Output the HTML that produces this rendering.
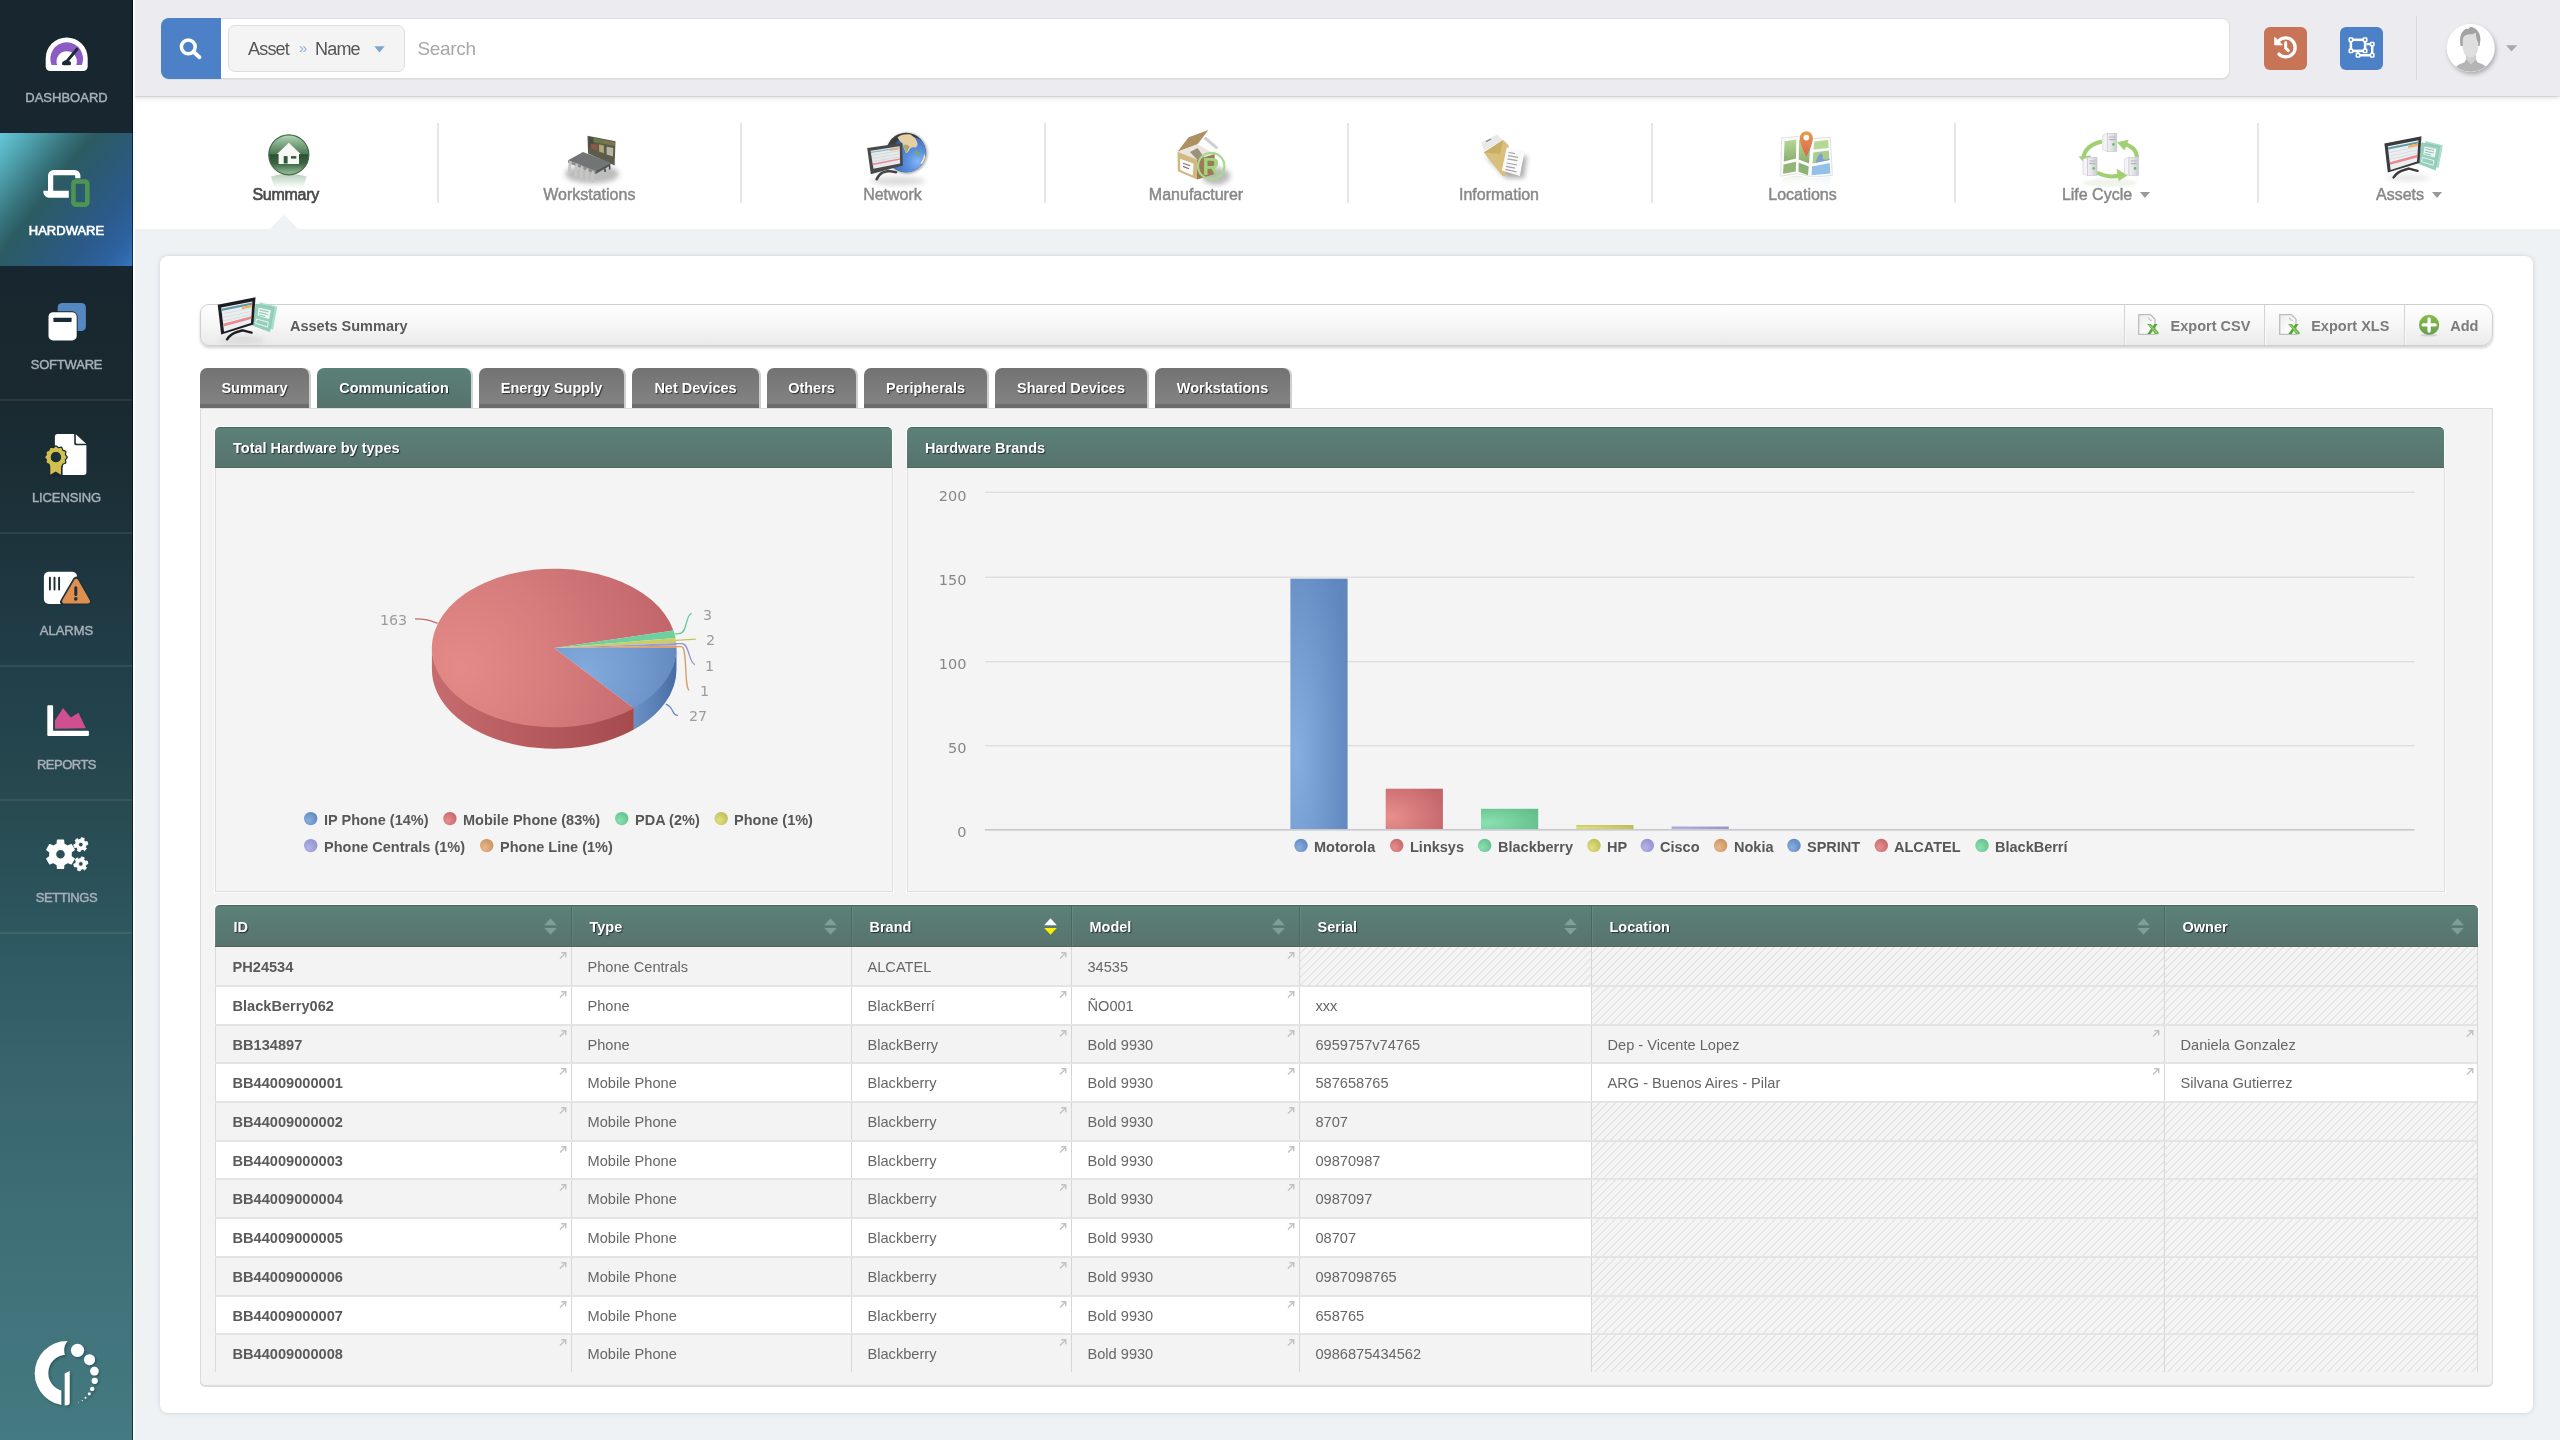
<!DOCTYPE html>
<html lang="en">
<head>
<meta charset="utf-8">
<title>Assets Summary</title>
<style>
*{box-sizing:border-box;margin:0;padding:0}
html,body{width:2560px;height:1440px;overflow:hidden}
body{background:#eef2f5;font-family:"Liberation Sans",sans-serif;color:#555;position:relative}
body>*{will-change:transform}
.abs,svg.abs{position:absolute}
svg{display:block;overflow:visible}
/* sidebar */
#side{position:absolute;left:0;top:0;width:133px;height:1440px;overflow:hidden;
 background:linear-gradient(180deg,#17262f 0px,#18272f 266px,#19292f 400px,#1d333c 540px,#21404a 680px,#27494f 800px,#2f5a63 960px,#39666f 1100px,#3f7078 1250px,#447a81 1440px)}
#side:after{content:"";position:absolute;right:0;top:0;width:1.3px;height:1440px;background:rgba(0,8,22,.62);z-index:3}
#strip{position:absolute;left:133px;top:0;width:2px;height:1440px;background:#fdfdfd;z-index:9}
#side .it{position:absolute;left:0;width:133px;height:133px}
#side .sep{position:absolute;left:0;width:133px;height:2px;background:rgba(255,255,255,.08)}
#side .it.act{z-index:2;background:linear-gradient(128deg,#66c8d8 0%,#4fa3af 14%,#37737c 30%,#2c5b62 40%,#2b5a70 52%,#2b5a88 72%,#2d62a0 88%,#3474ba 100%)}
#side .lb{position:absolute;left:0;width:133px;top:90px;text-align:center;font-size:13px;color:#a8afb9;line-height:16px;-webkit-text-stroke:.45px #a8afb9}
#side .act .lb{color:#fff;-webkit-text-stroke:.65px #fff}
/* top bar */
#top{position:absolute;left:133px;top:0;width:2427px;height:95.5px;background:#ebebf0;box-shadow:0 1px 5px rgba(0,0,0,.2);z-index:5}
#sbox{position:absolute;left:28px;top:18px;width:2069px;height:61px;background:#fff;border:1px solid #dcdce0;border-radius:8px;box-shadow:0 1px 1px rgba(0,0,0,.05)}
#sbtn{position:absolute;left:-1px;top:-1px;width:60px;height:61px;background:#4d81c7;border-radius:8px 0 0 8px}
#ssel{position:absolute;left:66px;top:6px;width:177px;height:47px;background:#f4f4f4;border:1px solid #dedede;border-radius:7px;font-size:18px;color:#555}
#ssel span{position:absolute;top:12px;line-height:22px;white-space:nowrap;letter-spacing:-.8px}
#sph{position:absolute;left:255.5px;top:17.5px;font-size:19px;color:#a8a8a8;line-height:24px;letter-spacing:-.35px}
.tbtn{position:absolute;top:27px;width:43px;height:43px;border-radius:6px}
/* nav */
#nav{position:absolute;left:133px;top:97px;width:2427px;height:132px;background:#fff}
#nav .dv{position:absolute;top:26px;width:2px;height:80px;background:#e6e6e6}
#nav .nl{position:absolute;top:87px;text-align:center;font-size:16px;line-height:22px;color:#888;-webkit-text-stroke:.45px #888;white-space:nowrap;width:303px}
#nav .nl.on{color:#484848;-webkit-text-stroke:.6px #484848;letter-spacing:-.3px}
.car{display:inline-block;width:0;height:0;border-left:5px solid transparent;border-right:5px solid transparent;border-top:6px solid #999;margin-left:8px;vertical-align:2px}
/* card */
#card{position:absolute;left:160px;top:256px;width:2373px;height:1157px;background:#fff;border-radius:8px;box-shadow:0 0 4px rgba(120,140,160,.35)}
/* toolbar (coords relative to body) */
#tb{position:absolute;left:200px;top:304px;width:2293px;height:42px;border:1px solid #cfcfcf;border-radius:9px 11px 11px 9px;background:linear-gradient(180deg,#fefefe 0%,#f6f6f6 50%,#eaeaea 100%);box-shadow:0 2px 3px rgba(0,0,0,.18)}
#tb .tt{position:absolute;left:89px;top:12px;font-size:14.5px;font-weight:bold;color:#5a5a5a;line-height:18px;white-space:nowrap}
#tb .sp{position:absolute;top:0;width:1px;height:40px;background:#d4d4d4;box-shadow:1px 0 0 #fbfbfb}
#tb .bt{position:absolute;top:12px;font-size:14.5px;font-weight:bold;color:#7b7b7b;line-height:18px;white-space:nowrap}
/* tabs */
.tab{position:absolute;top:368px;height:40px;border-radius:7px 7px 0 0;color:#fff;font-weight:bold;font-size:14.5px;line-height:18px;padding-top:11px;text-align:center;text-shadow:1px 1px 1px rgba(0,0,0,.65);white-space:nowrap;
 background:linear-gradient(180deg,#727272 0%,#787878 30%,#838383 88%,#6c6c6c 92%,#6c6c6c 100%);box-shadow:2px 0 0 #cfcfcf}
.tab.on{background:linear-gradient(180deg,#5a8078 0%,#56736c 100%);box-shadow:2px 0 0 #cfd6d4}
#panel{position:absolute;left:200px;top:408px;width:2293px;height:978px;background:#f3f3f3;border:1px solid #dcdcdc;border-radius:0 0 5px 5px;box-shadow:0 1px 0 #dadada}
.ph{position:absolute;height:41px;border-radius:5px 5px 0 0;border-top:1px solid #48665f;border-bottom:1px solid #4b6861;box-shadow:-1px -1px 0 #fdfdfd,1px -1px 0 #fdfdfd;background:linear-gradient(180deg,#5b8179 0%,#57736c 100%);color:#fff;font-weight:bold;font-size:14.5px;line-height:18px;padding:11px 0 0 18px;text-shadow:1px 1px 1px rgba(0,0,0,.6);white-space:nowrap}
.pb{box-shadow:0 0 0 1px #fbfbfb;position:absolute;border:1px solid #dedede;border-top:none;background:#f4f4f4}
.lg{position:absolute;font-size:14.5px;font-weight:bold;color:#575757;line-height:18px;white-space:nowrap}
.ax{margin-top:.8px;position:absolute;font-family:"DejaVu Sans",sans-serif;font-size:14.5px;color:#878787;line-height:18px;white-space:nowrap}
.pl{position:absolute;font-family:"DejaVu Sans",sans-serif;font-size:14.3px;color:#9c9c9c;line-height:18px;white-space:nowrap;letter-spacing:-.15px}
/* table */
#th{z-index:2;position:absolute;left:215px;top:905px;width:2263px;height:42px;border-radius:5px 5px 0 0;border-top:1px solid #48665f;border-bottom:1px solid #4b6861;box-shadow:-1px -1px 0 #fdfdfd,1px -1px 0 #fdfdfd;background:linear-gradient(180deg,#5b8179 0%,#57736c 100%);overflow:hidden}
#th .hc{position:absolute;top:-1px;height:42px;color:#fff;font-weight:bold;font-size:14.5px;line-height:18px;padding:13px 0 0 17.5px;text-shadow:1px 1px 1px rgba(0,0,0,.6);border-left:1px solid #4b6760;box-shadow:inset 1px 0 0 rgba(255,255,255,.08)}
.row{position:absolute;left:215px;width:2263px;overflow:hidden;background:#f3f3f3;border-top:2px solid #e4e4e4}
.row.w{background:#fff}
.row.f{border-top:none}
.row.f .c span{margin-top:-7.5px}
.row.f .c svg{top:5.5px}
.row .c{position:absolute;top:0;bottom:0;border-left:1px solid #d6d6d6;font-size:14.6px;color:#666;padding-left:15.5px;white-space:nowrap}
.row .c span{position:absolute;top:50%;margin-top:-8.5px;line-height:18px}
.row .c.b{font-weight:bold;color:#5a5a5a;padding-left:16.5px}
.row .c.e{background:repeating-linear-gradient(135deg,#f4f4f4 0,#f4f4f4 4.6px,#e5e5e5 4.6px,#e5e5e5 5.657px)}
.row .c svg{position:absolute;right:5px;top:3.5px}
</style>
</head>
<body>
<div id="side">
<div class="sep" style="top:398.8px"></div>
<div class="sep" style="top:532.0px"></div>
<div class="sep" style="top:665.3px"></div>
<div class="sep" style="top:798.5px"></div>
<div class="sep" style="top:931.8px"></div>
<div class="it" style="top:0px"><svg class="abs" style="left:0;top:0" width="133" height="133" viewBox="0 0 133 133"><path d="M45.7 58.4a21 21 0 0 1 42 0v8.2a4.5 4.5 0 0 1-4.5 4.5h-33a4.5 4.5 0 0 1-4.5-4.5z" fill="#fff"/><path d="M51.6 65.1a16.4 16.4 0 1 1 30.2 0l-5.6 0a10.2 10.2 0 1 0-19 0z" fill="#8a5cc4"/><path d="M66.6 61.6L77 49.2" stroke="#1b2b34" stroke-width="3" stroke-linecap="round" fill="none"/><path d="M62.3 64.8a2.2 2.2 0 0 1 .4-2.6l1.6-1.5a3 3 0 0 1 3.4-.4l2.2 1.4a2.2 2.2 0 0 1 .9 2.2l-.1 0.9z" fill="#1b2b34"/><rect x="62.2" y="61.6" width="8.7" height="3.6" rx="1.4" fill="#1b2b34"/></svg><div class="lb" style="top:90.2px;letter-spacing:0.00px">DASHBOARD</div></div>
<div class="it act" style="top:133px"><svg class="abs" style="left:0;top:0" width="133" height="133" viewBox="0 0 133 133"><path d="M50.6 58V42.6a3 3 0 0 1 3-3h21.2a3 3 0 0 1 3 3v2.6" fill="none" stroke="#fff" stroke-width="5.2" stroke-linejoin="round"/><path d="M43.4 57.7H68.8V64.7H48.9a5.5 5.5 0 0 1-5.5-5.5z" fill="#fff"/><rect x="73.4" y="48.5" width="13.9" height="23.1" rx="2.2" fill="none" stroke="#4f9450" stroke-width="4.6"/></svg><div class="lb" style="top:90.4px;letter-spacing:0.00px">HARDWARE</div></div>
<div class="it" style="top:266px"><svg class="abs" style="left:0;top:0" width="133" height="133" viewBox="0 0 133 133"><rect x="57.7" y="37" width="28.2" height="28.1" rx="4.5" fill="#5587c0"/><rect x="47.6" y="45.3" width="30" height="30" rx="5.4" fill="#18272f"/><rect x="48.5" y="46.2" width="28.2" height="28.2" rx="4.5" fill="#fff"/><rect x="53.4" y="51.7" width="18.2" height="4.2" rx=".6" fill="#1b2b36"/></svg><div class="lb" style="top:90.6px;letter-spacing:-0.20px">SOFTWARE</div></div>
<div class="it" style="top:399px"><svg class="abs" style="left:0;top:0" width="133" height="133" viewBox="0 0 133 133"><path d="M57.6 34.9H74.2V44.6a1.6 1.6 0 0 0 1.6 1.6h10.6V73.2a2.7 2.7 0 0 1-2.7 2.7H57.6a2.7 2.7 0 0 1-2.7-2.7V37.6a2.7 2.7 0 0 1 2.7-2.7z" fill="#fff"/><path d="M75.8 35.3L86.2 44.8H77a1.2 1.2 0 0 1-1.2-1.2z" fill="#fff"/><path d="M67.90 58.20 L67.67 58.97 L67.10 59.67 L66.50 60.31 L66.14 60.94 L66.13 61.67 L66.34 62.52 L66.48 63.42 L66.29 64.20 L65.71 64.75 L64.86 65.08 L64.02 65.32 L63.40 65.70 L63.02 66.32 L62.78 67.16 L62.45 68.01 L61.90 68.59 L61.12 68.78 L60.22 68.64 L59.37 68.43 L58.64 68.44 L58.01 68.80 L57.37 69.40 L56.67 69.97 L55.90 70.20 L55.13 69.97 L54.43 69.40 L53.79 68.80 L53.16 68.44 L52.43 68.43 L51.58 68.64 L50.68 68.78 L49.90 68.59 L49.35 68.01 L49.02 67.16 L48.78 66.32 L48.40 65.70 L47.78 65.32 L46.94 65.08 L46.09 64.75 L45.51 64.20 L45.32 63.42 L45.46 62.52 L45.67 61.67 L45.66 60.94 L45.30 60.31 L44.70 59.67 L44.13 58.97 L43.90 58.20 L44.13 57.43 L44.70 56.73 L45.30 56.09 L45.66 55.46 L45.67 54.73 L45.46 53.88 L45.32 52.98 L45.51 52.20 L46.09 51.65 L46.94 51.32 L47.78 51.08 L48.40 50.70 L48.78 50.08 L49.02 49.24 L49.35 48.39 L49.90 47.81 L50.68 47.62 L51.58 47.76 L52.43 47.97 L53.16 47.96 L53.79 47.60 L54.43 47.00 L55.13 46.43 L55.90 46.20 L56.67 46.43 L57.37 47.00 L58.01 47.60 L58.64 47.96 L59.37 47.97 L60.22 47.76 L61.12 47.62 L61.90 47.81 L62.45 48.39 L62.78 49.24 L63.02 50.08 L63.40 50.70 L64.02 51.08 L64.86 51.32 L65.71 51.65 L66.29 52.20 L66.48 52.98 L66.34 53.88 L66.13 54.73 L66.14 55.46 L66.50 56.09 L67.10 56.73 L67.67 57.43Z" fill="#19292f"/><path d="M49 63.5H62.6V77.6H49z" fill="#19292f"/><path d="M50.3 64H61V75.8L55.65 72.4L50.3 75.8z" fill="#d1c04f"/><path fill-rule="evenodd" d="M66.45 58.20 L66.24 58.88 L65.72 59.49 L65.16 60.04 L64.83 60.59 L64.84 61.23 L65.05 61.99 L65.19 62.78 L65.04 63.48 L64.51 63.96 L63.75 64.23 L63.00 64.42 L62.44 64.74 L62.12 65.30 L61.93 66.05 L61.66 66.81 L61.17 67.34 L60.48 67.49 L59.69 67.35 L58.93 67.14 L58.29 67.13 L57.74 67.46 L57.19 68.02 L56.58 68.54 L55.90 68.75 L55.22 68.54 L54.61 68.02 L54.06 67.46 L53.51 67.13 L52.87 67.14 L52.11 67.35 L51.32 67.49 L50.62 67.34 L50.14 66.81 L49.87 66.05 L49.68 65.30 L49.36 64.74 L48.80 64.42 L48.05 64.23 L47.29 63.96 L46.76 63.48 L46.61 62.78 L46.75 61.99 L46.96 61.23 L46.97 60.59 L46.64 60.04 L46.08 59.49 L45.56 58.88 L45.35 58.20 L45.56 57.52 L46.08 56.91 L46.64 56.36 L46.97 55.81 L46.96 55.17 L46.75 54.41 L46.61 53.62 L46.76 52.93 L47.29 52.44 L48.05 52.17 L48.80 51.98 L49.36 51.66 L49.68 51.10 L49.87 50.35 L50.14 49.59 L50.62 49.06 L51.32 48.91 L52.11 49.05 L52.87 49.26 L53.51 49.27 L54.06 48.94 L54.61 48.38 L55.22 47.86 L55.90 47.65 L56.58 47.86 L57.19 48.38 L57.74 48.94 L58.29 49.27 L58.93 49.26 L59.69 49.05 L60.48 48.91 L61.17 49.06 L61.66 49.59 L61.93 50.35 L62.12 51.10 L62.44 51.66 L63.00 51.98 L63.75 52.17 L64.51 52.44 L65.04 52.92 L65.19 53.62 L65.05 54.41 L64.84 55.17 L64.83 55.81 L65.16 56.36 L65.72 56.91 L66.24 57.52ZM50.80 58.20 a5.10 5.10 0 1 0 10.20 0 a5.10 5.10 0 1 0 -10.20 0Z" fill="#d1c04f"/><path d="M50.80 58.20 a5.10 5.10 0 1 0 10.20 0 a5.10 5.10 0 1 0 -10.20 0Z" fill="#1c3039"/></svg><div class="lb" style="top:91.0px;letter-spacing:-0.10px">LICENSING</div></div>
<div class="it" style="top:532px"><svg class="abs" style="left:0;top:0" width="133" height="133" viewBox="0 0 133 133"><rect x="43.9" y="39.7" width="33.2" height="32.3" rx="5" fill="#fff"/><path d="M49.9 45.6V57.6M54.5 45.6V57.6M59.1 45.6V57.6" stroke="#1b2b34" stroke-width="1.9" stroke-linecap="round"/><path d="M76.2 48.2L63.6 69.7H88.2z" fill="#1d323b" stroke="#1d323b" stroke-width="7" stroke-linejoin="round"/><path d="M76.2 48.9L64.2 69.4H87.9z" fill="#df9050" stroke="#df9050" stroke-width="4.2" stroke-linejoin="round"/><path d="M75.8 55.8V62.6" stroke="#1d323b" stroke-width="3" stroke-linecap="round"/><circle cx="75.8" cy="66.9" r="1.8" fill="#1d323b"/></svg><div class="lb" style="top:91.3px;letter-spacing:0.00px">ALARMS</div></div>
<div class="it" style="top:665px"><svg class="abs" style="left:0;top:0" width="133" height="133" viewBox="0 0 133 133"><path d="M47.3 41.2a1 1 0 0 1 1-1h3.8a1 1 0 0 1 1 1V65.8H87.9a1 1 0 0 1 1 1v3.3a1 1 0 0 1-1 1H48.3a1 1 0 0 1-1-1z" fill="#fff"/><path d="M55 63.7V55.4L63.1 43L70.7 52.6L78.5 47.8L85.9 63.3z" fill="#d04f90"/></svg><div class="lb" style="top:91.8px;letter-spacing:-0.50px">REPORTS</div></div>
<div class="it" style="top:798px"><svg class="abs" style="left:0;top:0" width="133" height="133" viewBox="0 0 133 133"><path fill-rule="evenodd" d="M57.08 45.95 L57.49 42.12 L63.51 42.12 L63.92 45.95 L67.76 48.17 L71.28 46.60 L74.29 51.81 L71.17 54.08 L71.17 58.52 L74.29 60.79 L71.28 66.00 L67.76 64.43 L63.92 66.65 L63.51 70.48 L57.49 70.48 L57.08 66.65 L53.24 64.43 L49.72 66.00 L46.71 60.79 L49.83 58.52 L49.83 54.08 L46.71 51.81 L49.72 46.60 L53.24 48.17ZM55.60 56.30 a4.90 4.90 0 1 0 9.80 0 a4.90 4.90 0 1 0 -9.80 0Z" fill="#fff" stroke="#fff" stroke-width="1.2" stroke-linejoin="round"/><path fill-rule="evenodd" d="M80.70 41.30 L81.45 39.53 L84.26 40.40 L83.87 42.28 L85.34 43.86 L87.25 43.62 L87.90 46.50 L86.08 47.10 L85.44 49.16 L86.60 50.69 L84.44 52.70 L83.00 51.42 L80.90 51.90 L80.15 53.67 L77.34 52.80 L77.73 50.92 L76.26 49.34 L74.35 49.58 L73.70 46.70 L75.52 46.10 L76.16 44.04 L75.00 42.51 L77.16 40.50 L78.60 41.78ZM78.50 46.60 a2.30 2.30 0 1 0 4.60 0 a2.30 2.30 0 1 0 -4.60 0Z" fill="#fff" stroke="#fff" stroke-width=".8" stroke-linejoin="round"/><path fill-rule="evenodd" d="M80.70 60.60 L81.45 58.83 L84.26 59.70 L83.87 61.58 L85.34 63.16 L87.25 62.92 L87.90 65.80 L86.08 66.40 L85.44 68.46 L86.60 69.99 L84.44 72.00 L83.00 70.72 L80.90 71.20 L80.15 72.97 L77.34 72.10 L77.73 70.22 L76.26 68.64 L74.35 68.88 L73.70 66.00 L75.52 65.40 L76.16 63.34 L75.00 61.81 L77.16 59.80 L78.60 61.08ZM78.50 65.90 a2.30 2.30 0 1 0 4.60 0 a2.30 2.30 0 1 0 -4.60 0Z" fill="#fff" stroke="#fff" stroke-width=".8" stroke-linejoin="round"/></svg><div class="lb" style="top:92.2px;letter-spacing:-0.45px">SETTINGS</div></div>
<svg class="abs" style="left:0;top:1330px" width="133" height="90" viewBox="0 1330 133 90"><defs><filter id="lgsh" x="-20%" y="-20%" width="150%" height="150%"><feDropShadow dx="1.3" dy="1.3" stdDeviation="1.1" flood-color="#0b2a30" flood-opacity=".45"/></filter><mask id="lgm" maskUnits="userSpaceOnUse" x="30" y="1335" width="80" height="80"><rect x="30" y="1335" width="80" height="80" fill="#000"/><circle cx="66.9" cy="1373.2" r="32.2" fill="#fff"/><circle cx="66.5" cy="1373" r="18.3" fill="#000"/><circle cx="77.5" cy="1350.3" r="13.4" fill="#000"/><rect x="70" y="1335" width="40" height="40" fill="#000"/><rect x="61.25" y="1373" width="50" height="40" fill="#000"/></mask></defs><g filter="url(#lgsh)"><rect x="30" y="1335" width="80" height="80" fill="#fff" mask="url(#lgm)"/><path d="M64.7 1373.6L69.7 1371V1402.3a3 3 0 0 1-3 3H64.7Z" fill="#fff"/><circle cx="77.5" cy="1350.3" r="6.6" fill="#fff"/><circle cx="89.5" cy="1359.7" r="5.5" fill="#fff"/><circle cx="94.4" cy="1371.1" r="4.3" fill="#fff"/><circle cx="94.7" cy="1380.8" r="3.1" fill="#fff"/><circle cx="92.2" cy="1388.9" r="2.2" fill="#fff"/><circle cx="89.25" cy="1393.8" r="1.5" fill="#fff"/><circle cx="85.5" cy="1397.8" r="1" fill="#fff"/><circle cx="82.2" cy="1400.6" r=".7" fill="#fff"/><circle cx="78.4" cy="1402.7" r=".45" fill="#fff"/></g></svg>
</div>
<div id="strip"></div>
<div id="top">
<div id="sbox"><div id="sbtn"><svg class="abs" style="left:0;top:0" width="61" height="61" viewBox="0 0 61 61"><circle cx="27.3" cy="28.8" r="6.9" fill="none" stroke="#fff" stroke-width="3.5"/><path d="M32.4 33.8L38.5 39.2" stroke="#fff" stroke-width="3.9" stroke-linecap="round"/></svg></div><div id="ssel"><span style="left:19px">Asset</span><span style="left:70px;color:#8fb3e2;font-size:15px;top:11px">&raquo;</span><span style="left:86px">Name</span><svg class="abs" style="left:145px;top:20px" width="11" height="7" viewBox="0 0 11 7"><path d="M.3 .3H10.7L5.5 6.4Z" fill="#80a6cf"/></svg></div><div id="sph">Search</div></div>
<div class="tbtn" style="left:2131px;background:#c87557"><svg class="abs" style="left:0;top:0" width="43" height="43" viewBox="0 0 43 43"><path d="M14.93 13.68A9.5 9.5 0 1 1 14.93 27.1" fill="none" stroke="#fff" stroke-width="3.3" stroke-linecap="round"/><path d="M10.7 10.2V17.9H18.5Z" fill="#fff" stroke="#fff" stroke-width=".8" stroke-linejoin="round"/><path d="M21.65 15.4V21.2L24.3 23.6" fill="none" stroke="#fff" stroke-width="3" stroke-linecap="round" stroke-linejoin="round"/></svg></div>
<div class="tbtn" style="left:2207px;background:#4d81c7"><svg class="abs" style="left:0;top:0" width="43" height="43" viewBox="0 0 43 43"><path d="M26.4 17.1H32.2V28.3H18V25" fill="none" stroke="#fff" stroke-width="2.4"/><rect x="10.9" y="12.8" width="14.2" height="11.1" fill="none" stroke="#fff" stroke-width="2.5"/><rect x="9.2" y="11.1" width="3.4" height="3.4" rx=".6" fill="#4d81c7" stroke="#fff" stroke-width="1.5"/><rect x="23.4" y="11.1" width="3.4" height="3.4" rx=".6" fill="#4d81c7" stroke="#fff" stroke-width="1.5"/><rect x="9.2" y="22.2" width="3.4" height="3.4" rx=".6" fill="#4d81c7" stroke="#fff" stroke-width="1.5"/><rect x="23.4" y="22.2" width="3.4" height="3.4" rx=".6" fill="#4d81c7" stroke="#fff" stroke-width="1.5"/><rect x="30.5" y="15.4" width="3.4" height="3.4" rx=".6" fill="#4d81c7" stroke="#fff" stroke-width="1.5"/><rect x="30.5" y="26.6" width="3.4" height="3.4" rx=".6" fill="#4d81c7" stroke="#fff" stroke-width="1.5"/><rect x="16.3" y="26.6" width="3.4" height="3.4" rx=".6" fill="#4d81c7" stroke="#fff" stroke-width="1.5"/></svg></div>
<div class="abs" style="left:2283px;top:16px;width:1px;height:64px;background:#d9d9de"></div>
<svg class="abs" style="left:2300px;top:14px" width="80" height="72" viewBox="2433 14 80 72"><defs><filter id="avs" x="-30%" y="-30%" width="170%" height="170%"><feDropShadow dx="1.5" dy="2.5" stdDeviation="2.2" flood-color="#000" flood-opacity=".28"/></filter><clipPath id="avc"><circle cx="2470.7" cy="47.9" r="23.9"/></clipPath></defs><circle cx="2470.7" cy="47.9" r="23.9" fill="#fff" filter="url(#avs)"/><g clip-path="url(#avc)"><path d="M2452 73.5C2453.5 66.5 2459 64.2 2464.6 62.2L2466.2 58.4H2475.8L2477.4 62.2C2483 64.2 2488.5 66.5 2490 73.5Z" fill="#b4b4b4"/><path d="M2466 59.5L2471 64.5L2476 59.5V55H2466Z" fill="#cfcfcf"/><path d="M2460.6 46C2459.4 38 2460.2 31.5 2466.5 28.4L2468 29L2470.6 26.8L2473.2 27.6C2477 29.5 2480.8 33.5 2480.4 40L2479.6 46Z" fill="#a2a2a2"/><path d="M2462.7 40C2463 35.6 2466.5 34.3 2470.6 34.3C2472.6 34.3 2474.3 34 2476 32.6C2475.6 36.8 2477.2 41 2478.3 42.5V47C2478 53 2475 57.4 2470.5 57.4C2466 57.4 2463 53 2462.7 47Z" fill="#dedede"/></g><path d="M2506 45.3H2517.2L2511.6 51.5Z" fill="#a9a9a9"/></svg>
</div>
<div id="nav">
<div class="dv" style="left:304.0px"></div>
<div class="dv" style="left:607.3px"></div>
<div class="dv" style="left:910.7px"></div>
<div class="dv" style="left:1214.1px"></div>
<div class="dv" style="left:1517.5px"></div>
<div class="dv" style="left:1820.8px"></div>
<div class="dv" style="left:2124.2px"></div>
<div class="nl on" style="left:1.2px">Summary</div>
<div class="nl" style="left:304.8px">Workstations</div>
<div class="nl" style="left:608.0px">Network</div>
<div class="nl" style="left:911.5px">Manufacturer</div>
<div class="nl" style="left:1214.5px">Information</div>
<div class="nl" style="left:1518.0px">Locations</div>
<div class="nl" style="left:1821.5px">Life Cycle<i class="car"></i></div>
<div class="nl" style="left:2124.5px">Assets<i class="car"></i></div>
<svg class="abs" style="left:137px;top:117px" width="28" height="15" viewBox="0 0 28 15"><path d="M0 15L14 .6L28 15Z" fill="#eef2f5"/></svg>
<svg class="abs" style="left:0;top:0" width="2427" height="132" viewBox="133 97 2427 132"><defs><linearGradient id="gS" x1="0" y1="0" x2="0" y2="1"><stop offset="0" stop-color="#b4d8b8"/><stop offset=".2" stop-color="#86ae8b"/><stop offset=".47" stop-color="#4f7a56"/><stop offset=".5" stop-color="#2a5231"/><stop offset=".72" stop-color="#3c6543"/><stop offset=".9" stop-color="#7da584"/><stop offset="1" stop-color="#9abf9f"/></linearGradient><linearGradient id="gSr" x1="0" y1="0" x2="0" y2="1"><stop offset="0" stop-color="#9dbfa2" stop-opacity=".75"/><stop offset="1" stop-color="#9dbfa2" stop-opacity="0"/></linearGradient><filter id="b1" x="-30%" y="-30%" width="160%" height="160%"><feGaussianBlur stdDeviation="1"/></filter><filter id="b2" x="-40%" y="-40%" width="180%" height="180%"><feGaussianBlur stdDeviation="2.4"/></filter><filter id="b05" x="-20%" y="-20%" width="140%" height="140%"><feGaussianBlur stdDeviation=".5"/></filter><filter id="b07" x="-20%" y="-20%" width="140%" height="140%"><feGaussianBlur stdDeviation=".7"/></filter><radialGradient id="gGl" cx=".68" cy=".6" r=".7"><stop offset="0" stop-color="#86b6fa"/><stop offset=".35" stop-color="#5d92e0"/><stop offset=".8" stop-color="#4273c2"/><stop offset="1" stop-color="#34589c"/></radialGradient><linearGradient id="gMap" x1="0" y1="0" x2="0" y2="1"><stop offset="0" stop-color="#b6d895"/><stop offset="1" stop-color="#8aad70"/></linearGradient><linearGradient id="gPin" x1="0" y1="0" x2="0" y2="1"><stop offset="0" stop-color="#e6a24a"/><stop offset=".25" stop-color="#e48a52"/><stop offset="1" stop-color="#d96a48"/></linearGradient><linearGradient id="gFade" x1="0" y1="0" x2="0" y2="1"><stop offset="0" stop-color="#fff" stop-opacity=".55"/><stop offset="1" stop-color="#fff" stop-opacity="1"/></linearGradient><linearGradient id="gSrv" x1="0" y1="0" x2="1" y2="0"><stop offset="0" stop-color="#f1f1f3"/><stop offset=".4" stop-color="#e6e6ea"/><stop offset="1" stop-color="#c9c9d0"/></linearGradient></defs><g filter="url(#b05)"><path d="M271 176.5Q288.8 171 306.6 176.5L303 188H274.5Z" fill="url(#gSr)"/><circle cx="288.8" cy="154.8" r="20" fill="url(#gS)" stroke="#44694a" stroke-width="1.2"/><path d="M288.8 142.8L277 153.9H278.6V164H299V153.9H300.6Z" fill="#f7f7f5"/><rect x="283.7" y="156.1" width="3.9" height="7.4" fill="#31583a"/><rect x="291" y="156.1" width="5.3" height="2.5" fill="#31583a"/></g><g filter="url(#b07)"><ellipse cx="592" cy="174" rx="27" ry="9.5" fill="#7c7c7c" opacity=".5" filter="url(#b2)"/><path d="M587.5 135.8L615.5 141.3L614.6 165.5L588 153.5Z" fill="#5c5c4c"/><path d="M588.6 137L593.5 138L593.6 150L588.8 148Z" fill="#4b4b40"/><path d="M590.5 143.5L597.5 144.8L597.6 150.6L590.6 148.6Z" fill="#8c5948"/><path d="M593.5 138L604 140L604 144L593.6 142Z" fill="#6c7a46"/><path d="M599 144.6L603.8 145.5L603.9 153.2L599.1 151.6Z" fill="#b3a677"/><path d="M606.6 146.8L613.2 148L613 156.5L606.7 154.6Z" fill="#bab6a6"/><path d="M604 140L615 142.2L614.9 146L604 144Z" fill="#7c7450"/><path d="M568.1 160.2L583 152.1L610.5 162.5L595.6 171Z" fill="#727474"/><path d="M568.1 160.2L595.6 171V174L568.1 163Z" fill="#8a8c8c"/><path d="M595.6 171L610.5 162.5V165.5L595.6 174Z" fill="#565858"/><path d="M570.4 162.6Q569 168 569.6 172.5M576.6 165Q575.3 171 576 175.4M582 167.4Q580.8 173 581.4 177.6M587.4 169.6Q586.3 175 586.8 179.6M593 172Q592 177 592.4 181.6" fill="none" stroke="#c6c6c6" stroke-width="2.8" stroke-linecap="round"/><path d="M609.6 166V169.6M605 168.6V172" stroke="#4a4a4a" stroke-width="1.6"/></g><g filter="url(#b07)"><ellipse cx="898" cy="181" rx="27" ry="4.5" fill="#8a8a8a" opacity=".3" filter="url(#b2)"/><circle cx="907" cy="153.2" r="20.6" fill="#6a6a6a" opacity=".55" filter="url(#b1)"/><circle cx="906" cy="152.5" r="19.8" fill="#3e3e40"/><clipPath id="cgl"><circle cx="906" cy="152.5" r="19.8"/></clipPath><g clip-path="url(#cgl)"><circle cx="910.4" cy="157.4" r="20.6" fill="url(#gGl)"/><path d="M897.5 137.5Q902 133.5 910.5 134.5Q915 137 917 141.5Q918.5 146 915.6 147.6Q912.4 146.6 910.4 148.2Q907.6 153.4 906 153Q903.6 148.6 902.6 143.4Q899.4 141.4 897.5 137.5Z" fill="#e6cfa2"/><path d="M903.4 145Q906.4 143.6 909.6 146.4Q907.6 151.6 906 152.4Q904 148.8 903.4 145Z" fill="#a8a868"/><path d="M914.6 151.6Q917.6 150 919.2 152.6Q920.4 155.6 918.6 156Q915.8 155 914.6 151.6Z" fill="#7ea85a"/><path d="M920.4 163.4Q923.6 158.6 924.6 153.4Q926.6 158.6 923.4 164.4Z" fill="#f0e6c4"/></g><path d="M867.2 148L902 143.1L902.9 165.6L870.8 174.2Z" fill="#484849"/><path d="M870.6 150.7L899.7 146.2L900.1 163.4L873.5 168.8Z" fill="#e6eaec"/><path d="M870.8 151.7L899.7 147.2L899.75 148.6L871 153.1Z" fill="#8fb9c2"/><path d="M890 149.6L899.7 148.1L899.75 149.6L890.1 151.1Z" fill="#eeb577"/><path d="M872.6 163.6L900 158.2L900.05 159.7L872.8 165.2Z" fill="#e58f95"/><path d="M871.4 155.5L899.8 150.8M871.8 158.6L899.9 153.8M872.2 161.6L900 156.6" stroke="#cdd3d6" stroke-width=".7"/><path d="M876.7 179.2Q878.6 174.6 882.4 172.6L888 171Q892 171.4 896 172.2" fill="none" stroke="#454546" stroke-width="2.6" stroke-linecap="round"/></g><g filter="url(#b05)"><ellipse cx="1216" cy="176" rx="14" ry="9" fill="#777" opacity=".5" filter="url(#b2)"/><path d="M1203.2 138.6L1206 136.8L1218.4 147.4L1216.4 149.4Z" fill="#cfcfcf"/><path d="M1177.5 151.8L1188.6 137.2L1208.4 129.9L1197.6 144.2Z" fill="#ad9164"/><path d="M1177.5 151.8L1197 159.4L1214.7 153.9L1197.6 144.2Z" fill="#e9e6e0"/><path d="M1190 152L1197 159.4L1204 157.2L1197.6 148Z" fill="#6a5638" opacity=".6"/><path d="M1177.5 151.8L1197 159.4V179.6L1177.8 171.3Z" fill="#d2b883"/><path d="M1197 159.4L1214.7 153.9V174L1197 179.6Z" fill="#9b7b53"/><path d="M1180 158.8L1193.5 163.6L1192.8 175.4L1180.3 169.9Z" fill="#fbfbf8"/><path d="M1183 163.2L1190 165.8M1183 166.4L1189 168.8" stroke="#777" stroke-width="1.2"/><circle cx="1211.2" cy="166" r="13.2" fill="none" stroke="#a9d98c" stroke-width="2.2"/><text x="1210.9" y="174.7" font-family="Liberation Sans,sans-serif" font-weight="bold" font-size="23.5" text-anchor="middle" fill="#a2d484">R</text></g><g filter="url(#b05)"><path d="M1486 156L1506 178L1524 178L1527 156Z" fill="#666" opacity=".55" filter="url(#b2)"/><path d="M1481 142.8L1497 134.4L1502.5 140L1484.4 151.1Z" fill="#e9e9e9"/><path d="M1486 141.6L1491 139" stroke="#888" stroke-width="1.4"/><path d="M1483.75 152.5L1503.2 140L1508.75 145.6L1505.3 176.1L1502.5 176.1Z" fill="#d8bf7c"/><path d="M1483.75 152.5L1503.2 140L1500 154Z" fill="#c9ae68"/><path d="M1506.7 147.6L1524.7 150.4L1519.9 176.1L1501.8 170.6Z" fill="#fafafa"/><path d="M1508.5 152.5L1515 153.7M1508 155.6L1518 157.4M1507.4 158.8L1517.4 160.6M1506.6 163L1517 165M1506 166.3L1515 168.2M1505.4 169.4L1516.5 171.8" stroke="#a5a5a5" stroke-width="1.2"/></g><g filter="url(#b05)"><path d="M1781.7 137.9L1797.6 136.5L1813 138.6L1830.3 137.2L1832.4 175.4L1813 177L1797.5 173.8L1780.6 176.1Z" fill="#fbfbfb" stroke="#e1e1e1" stroke-width="1"/><path d="M1784.6 141.2L1796.2 139.6L1796 158.6L1783.8 161.6Z" fill="url(#gMap)"/><path d="M1783.6 164.6L1796 161.8L1795.8 171.6L1783 173.8Z" fill="#93b577"/><path d="M1799 139.7L1810.6 141.2L1809 163.4L1798.8 159.4Z" fill="url(#gMap)"/><path d="M1798.7 162.6L1808.7 166.4L1808 175.2L1798.5 171.8Z" fill="#8fb174"/><path d="M1814.4 141.4L1828.2 140L1828.6 148L1813.6 149.6Z" fill="#b5d894"/><path d="M1813.4 152.4L1828.8 150.6L1829.4 160L1812.6 163.4Z" fill="#a9cd8a"/><path d="M1815.5 162.8Q1818 154 1821 153.2Q1823 154 1822.8 159Q1826 160.6 1829.4 158.6L1829.5 160L1812.6 163.4Z" fill="#7f9fd2"/><path d="M1812.2 166.4L1829.6 163L1830.4 173.4L1811.6 175.3Z" fill="#93c0e6"/><path d="M1811.7 170Q1812 166.6 1814.4 166L1812.2 166.4Z" fill="#9dc07f"/><path d="M1806.3 156.7Q1799.7 144 1799.7 137.9A6.6 6.6 0 0 1 1812.9 137.9Q1812.9 144 1806.3 156.7Z" fill="url(#gPin)"/><circle cx="1806.3" cy="137.6" r="2.9" fill="#f7f7f7"/><g opacity=".35"><path d="M1783 177.8L1797.5 175.4L1813 178.6L1830.4 177V185H1783Z" fill="#b5d2a4"/><path d="M1812 178.6L1830.4 177V185H1812Z" fill="#a6cdea"/></g><rect x="1780" y="177" width="54" height="10" fill="url(#gFade)"/></g><g filter="url(#b05)"><path d="M2102 141.5Q2085 145 2083.2 158.4" fill="none" stroke="#a1cf73" stroke-width="4"/><path d="M2078.6 156.4L2091.6 155.4L2083.8 162.4Z" fill="#a1cf73"/><path d="M2097 172.6Q2108 178.5 2121 175.2" fill="none" stroke="#a1cf73" stroke-width="4"/><path d="M2116.5 168.8L2127.6 175.2L2118.6 181.2Z" fill="#a1cf73"/><path d="M2137 157Q2136 146.5 2123.4 144" fill="none" stroke="#a1cf73" stroke-width="4"/><path d="M2128.6 139.8L2117 142.2L2124.4 150.6Z" fill="#a1cf73"/><path d="M2102.8 135.0L2107.4 133.4V151.4L2102.8 149.8Z" fill="#f4f4f6" stroke="#cfcfd4" stroke-width=".6"/><rect x="2107.4" y="133.4" width="9.4" height="18" fill="url(#gSrv)" stroke="#c2c2c8" stroke-width=".6"/><path d="M2109.1 137.0h6M2109.1 139.6h6" stroke="#b4b4ba" stroke-width="1.1"/><circle cx="2113.4" cy="144.4" r="1.3" fill="#5fc25a"/><path d="M2083.0 159.0L2087.6 157.4V175.4L2083.0 173.8Z" fill="#f4f4f6" stroke="#cfcfd4" stroke-width=".6"/><rect x="2087.6" y="157.4" width="9.4" height="18" fill="url(#gSrv)" stroke="#c2c2c8" stroke-width=".6"/><path d="M2089.3 161.0h6M2089.3 163.6h6" stroke="#b4b4ba" stroke-width="1.1"/><circle cx="2093.6" cy="168.4" r="1.3" fill="#5fc25a"/><path d="M2124.4 159.0L2129.0 157.4V175.4L2124.4 173.8Z" fill="#f4f4f6" stroke="#cfcfd4" stroke-width=".6"/><rect x="2129.0" y="157.4" width="9.4" height="18" fill="url(#gSrv)" stroke="#c2c2c8" stroke-width=".6"/><path d="M2130.7 161.0h6M2130.7 163.6h6" stroke="#b4b4ba" stroke-width="1.1"/><circle cx="2135.0" cy="168.4" r="1.3" fill="#5fc25a"/><ellipse cx="2110" cy="183" rx="27" ry="4" fill="#c9d9c0" opacity=".3" filter="url(#b1)"/></g><g filter="url(#b05)"><ellipse cx="2408" cy="178" rx="22" ry="3.5" fill="#777" opacity=".16" filter="url(#b2)"/><path d="M2425.5 141L2442.8 145.2L2438.6 168L2422 162Z" fill="#a9dccb"/><path d="M2421.9 142.8L2439.6 146.3L2435.4 169.9L2418.75 163.6Z" fill="#96d0bc" stroke="#82c0ab" stroke-width=".6"/><path d="M2424.5 146.4L2436.4 148.8L2434.8 157.4L2423.3 154.4Z" fill="#e9f6f1"/><path d="M2425.4 148.6L2434 150.4M2425 151.2L2433.6 153M2424.6 153.6L2431 155" stroke="#8cc4b2" stroke-width="1"/><path d="M2422.6 157.4L2434 160.6L2433.2 165.4L2421.6 161.6Z" fill="none" stroke="#e3f3ee" stroke-width="1"/><path d="M2384.4 143.5L2421.5 136.2L2419.4 162.9L2387.8 172.6Z" fill="#3a3a3c"/><path d="M2387.8 146.3L2418.4 140.3L2417 161.5L2390.6 169.9Z" fill="#eceff1"/><path d="M2388 147.4L2418.3 141.4L2418.1 143.6L2388.3 149.6Z" fill="#5f9aa8"/><path d="M2408 145.6L2418 143.6L2417.8 146L2408.2 148Z" fill="#f0b35a"/><path d="M2389.8 162.2L2417.3 154.8L2417.1 157.4L2390.1 164.8Z" fill="#e88a8e"/><path d="M2389 152.5L2417.8 146.6M2389.4 156L2417.6 150M2389.6 159.4L2417.4 153" stroke="#cfd6da" stroke-width=".7"/><path d="M2393.6 177.4Q2397.5 171.6 2404 170L2409 168.6Q2414 169.8 2417.6 170.8" fill="none" stroke="#3a3a3c" stroke-width="2.4" stroke-linecap="round"/></g></svg>
</div>
<div id="card"></div>
<div id="tb"><div class="tt">Assets Summary</div>
<div class="sp" style="left:1923px"></div>
<div class="sp" style="left:2063px"></div>
<div class="sp" style="left:2203px"></div>
<div class="bt" style="left:1969.6px">Export CSV</div>
<div class="bt" style="left:2110.2px">Export XLS</div>
<div class="bt" style="left:2249.2px">Add</div>
</div>
<svg class="abs" style="left:2138.4px;top:314.4px" width="24" height="24" viewBox="0 0 24 24"><defs><linearGradient id="gd2138" x1="0" y1="0" x2="1" y2="1"><stop offset="0" stop-color="#e9ebec"/><stop offset=".6" stop-color="#fbfbfb"/><stop offset="1" stop-color="#fff"/></linearGradient></defs><path d="M.7 .7H12.6L17 5.2V20.4H.7Z" fill="url(#gd2138)" stroke="#bdbdbd" stroke-width="1.3" stroke-linejoin="round"/><path d="M10.8 3.2Q10.6 6.4 14 6.3" fill="none" stroke="#bdbdbd" stroke-width="1.1"/><path d="M9.4 9.9H12.6L20.6 18.5H17.2Z" fill="#63ad45"/><path d="M16.4 9.9H19.6L12.6 20H9.3Z" fill="#5aa43d"/><path d="M9.4 9.9H12.6L20.6 18.5L20.4 20.2H17.4Z" fill="#69b64a"/><path d="M11.5 11L18.8 19" stroke="#9ad87e" stroke-width="1.1"/></svg>
<svg class="abs" style="left:2278.5px;top:314.4px" width="24" height="24" viewBox="0 0 24 24"><defs><linearGradient id="gd2278" x1="0" y1="0" x2="1" y2="1"><stop offset="0" stop-color="#e9ebec"/><stop offset=".6" stop-color="#fbfbfb"/><stop offset="1" stop-color="#fff"/></linearGradient></defs><path d="M.7 .7H12.6L17 5.2V20.4H.7Z" fill="url(#gd2278)" stroke="#bdbdbd" stroke-width="1.3" stroke-linejoin="round"/><path d="M10.8 3.2Q10.6 6.4 14 6.3" fill="none" stroke="#bdbdbd" stroke-width="1.1"/><path d="M9.4 9.9H12.6L20.6 18.5H17.2Z" fill="#63ad45"/><path d="M16.4 9.9H19.6L12.6 20H9.3Z" fill="#5aa43d"/><path d="M9.4 9.9H12.6L20.6 18.5L20.4 20.2H17.4Z" fill="#69b64a"/><path d="M11.5 11L18.8 19" stroke="#9ad87e" stroke-width="1.1"/></svg>
<svg class="abs" style="left:2415px;top:311px" width="28" height="28" viewBox="2415 311 28 28"><defs><linearGradient id="gAdd" x1="0" y1="0" x2="0" y2="1"><stop offset="0" stop-color="#86bd48"/><stop offset=".55" stop-color="#72aa45"/><stop offset="1" stop-color="#6b9f58"/></linearGradient></defs><ellipse cx="2429.1" cy="335.2" rx="8.5" ry="1.4" fill="#000" opacity=".12"/><circle cx="2429.1" cy="324.9" r="10.1" fill="url(#gAdd)"/><path d="M2423.1 324.9H2435.2M2429.1 318.9V331" stroke="#fff" stroke-width="3.3" stroke-linecap="round"/></svg>
<svg class="abs" style="left:205px;top:290px" width="85" height="62" viewBox="205 290 85 62"><defs><filter id="b05" x="-20%" y="-20%" width="140%" height="140%"><feGaussianBlur stdDeviation=".45"/></filter><filter id="b2" x="-40%" y="-40%" width="180%" height="180%"><feGaussianBlur stdDeviation="2.4"/></filter></defs><filter id="b03" x="-20%" y="-20%" width="140%" height="140%"><feGaussianBlur stdDeviation=".35"/></filter><g filter="url(#b03)" transform="translate(-2214.39 158.38) scale(1.020)"><ellipse cx="2408" cy="178" rx="22" ry="3.5" fill="#777" opacity=".16" filter="url(#b2)"/><path d="M2425.5 141L2442.8 145.2L2438.6 168L2422 162Z" fill="#a9dccb"/><path d="M2421.9 142.8L2439.6 146.3L2435.4 169.9L2418.75 163.6Z" fill="#96d0bc" stroke="#82c0ab" stroke-width=".6"/><path d="M2424.5 146.4L2436.4 148.8L2434.8 157.4L2423.3 154.4Z" fill="#e9f6f1"/><path d="M2425.4 148.6L2434 150.4M2425 151.2L2433.6 153M2424.6 153.6L2431 155" stroke="#8cc4b2" stroke-width="1"/><path d="M2422.6 157.4L2434 160.6L2433.2 165.4L2421.6 161.6Z" fill="none" stroke="#e3f3ee" stroke-width="1"/><path d="M2384.4 143.5L2421.5 136.2L2419.4 162.9L2387.8 172.6Z" fill="#1e1e20"/><path d="M2387.8 146.3L2418.4 140.3L2417 161.5L2390.6 169.9Z" fill="#eceff1"/><path d="M2388 147.4L2418.3 141.4L2418.1 143.6L2388.3 149.6Z" fill="#5f9aa8"/><path d="M2408 145.6L2418 143.6L2417.8 146L2408.2 148Z" fill="#f0b35a"/><path d="M2389.8 162.2L2417.3 154.8L2417.1 157.4L2390.1 164.8Z" fill="#e88a8e"/><path d="M2389 152.5L2417.8 146.6M2389.4 156L2417.6 150M2389.6 159.4L2417.4 153" stroke="#cfd6da" stroke-width=".7"/><path d="M2393.6 177.4Q2397.5 171.6 2404 170L2409 168.6Q2414 169.8 2417.6 170.8" fill="none" stroke="#1e1e20" stroke-width="2.4" stroke-linecap="round"/></g></svg>
<div class="tab" style="left:200px;width:109px">Summary</div>
<div class="tab on" style="left:317px;width:154px">Communication</div>
<div class="tab" style="left:479px;width:145px">Energy Supply</div>
<div class="tab" style="left:632px;width:127px">Net Devices</div>
<div class="tab" style="left:767px;width:89px">Others</div>
<div class="tab" style="left:864px;width:123px">Peripherals</div>
<div class="tab" style="left:995px;width:152px">Shared Devices</div>
<div class="tab" style="left:1155px;width:135px">Workstations</div>
<div id="panel"></div>
<div class="pb" style="left:215px;top:468px;width:678px;height:424px"></div>
<div class="pb" style="left:907px;top:468px;width:1538px;height:424px"></div>
<div class="ph" style="left:215px;top:427px;width:677px">Total Hardware by types</div>
<div class="ph" style="left:907px;top:427px;width:1537px">Hardware Brands</div>
<svg class="abs" style="left:216px;top:468px" width="676" height="422" viewBox="216 468 676 422"><defs><radialGradient id="pr" gradientUnits="userSpaceOnUse" cx="462" cy="668" r="215"><stop offset="0" stop-color="#e48a88"/><stop offset=".45" stop-color="#d67c7c"/><stop offset="1" stop-color="#c1656a"/></radialGradient><radialGradient id="pb" gradientUnits="userSpaceOnUse" cx="585" cy="672" r="95"><stop offset="0" stop-color="#82aadc"/><stop offset=".6" stop-color="#7199cd"/><stop offset="1" stop-color="#6389bf"/></radialGradient><linearGradient id="prs" gradientUnits="userSpaceOnUse" x1="432" y1="0" x2="634" y2="0"><stop offset="0" stop-color="#c66c6e"/><stop offset=".45" stop-color="#b85c5f"/><stop offset="1" stop-color="#a54b4e"/></linearGradient><linearGradient id="pbs" gradientUnits="userSpaceOnUse" x1="634" y1="0" x2="677" y2="0"><stop offset="0" stop-color="#6a90c6"/><stop offset=".5" stop-color="#5a80b6"/><stop offset="1" stop-color="#466ca3"/></linearGradient><radialGradient id="pdb" cx=".35" cy=".65" r=".75"><stop offset="0" stop-color="#86aee0"/><stop offset="1" stop-color="#5f86bd"/></radialGradient><radialGradient id="pdr" cx=".35" cy=".65" r=".75"><stop offset="0" stop-color="#e88e8c"/><stop offset="1" stop-color="#c3666a"/></radialGradient><radialGradient id="pdg" cx=".35" cy=".65" r=".75"><stop offset="0" stop-color="#8be0b0"/><stop offset="1" stop-color="#62bf8b"/></radialGradient><radialGradient id="pdy" cx=".35" cy=".65" r=".75"><stop offset="0" stop-color="#e0e07c"/><stop offset="1" stop-color="#bcbc58"/></radialGradient><radialGradient id="pdp" cx=".35" cy=".65" r=".75"><stop offset="0" stop-color="#b4b4ea"/><stop offset="1" stop-color="#9090cc"/></radialGradient><radialGradient id="pdo" cx=".35" cy=".65" r=".75"><stop offset="0" stop-color="#e8b888"/><stop offset="1" stop-color="#cc9060"/></radialGradient></defs><path d="M633.89 706.66A122.3 79.3 0 0 1 431.90 646.50L431.90 669.40A122.3 79.3 0 0 0 633.89 729.56Z" fill="url(#prs)"/><path d="M676.50 646.50A122.3 79.3 0 0 1 633.89 706.66L633.89 729.56A122.3 79.3 0 0 0 676.50 669.40Z" fill="url(#pbs)"/><path d="M554.20 648.00L676.50 648.00A122.3 79.3 0 0 1 633.89 708.16Z" fill="url(#pb)"/><path d="M554.20 648.00L633.89 708.16A122.3 79.3 0 1 1 673.46 630.44Z" fill="url(#pr)"/><path d="M554.20 648.00L673.46 630.44A122.3 79.3 0 0 1 675.51 637.91Z" fill="#6ecf9f"/><path d="M554.20 648.00L675.51 637.91A122.3 79.3 0 0 1 676.25 642.94Z" fill="#cdcd68"/><path d="M554.20 648.00L676.25 642.94A122.3 79.3 0 0 1 676.44 645.47Z" fill="#9a9ad8"/><path d="M554.20 648.00L676.44 645.47A122.3 79.3 0 0 1 676.50 648.00Z" fill="#d9a070"/><path d="M415 618.8C426 618.8 430 620.5 437.5 623.3" fill="none" stroke="#c46a6c" stroke-width="1.3"/><path d="M691.7 613.3C685.5 614 687.5 632.4 680 633.4L674.7 634.2" fill="none" stroke="#68c898" stroke-width="1.3"/><path d="M695.8 639.2L675.8 640.4" fill="none" stroke="#c4c45c" stroke-width="1.3"/><path d="M695 664.7C688.5 663 689.5 643.7 682 643.7L675.8 643.7" fill="none" stroke="#9292d4" stroke-width="1.3"/><path d="M689.2 690C684.2 689 687.4 646.9 681.6 646.7L675.8 646.7" fill="none" stroke="#d49a68" stroke-width="1.3"/><path d="M678 715.3C671.5 716.2 674.5 707.2 665.8 704.2" fill="none" stroke="#6088c2" stroke-width="1.3"/><circle cx="310.7" cy="818.6" r="6.7" fill="url(#pdb)"/><circle cx="449.9" cy="818.6" r="6.7" fill="url(#pdr)"/><circle cx="621.7" cy="818.6" r="6.7" fill="url(#pdg)"/><circle cx="721.2" cy="818.6" r="6.7" fill="url(#pdy)"/><circle cx="310.7" cy="845.6" r="6.7" fill="url(#pdp)"/><circle cx="486.7" cy="845.6" r="6.7" fill="url(#pdo)"/></svg>
<div class="pl" style="left:380.3px;top:611.0px">163</div>
<div class="pl" style="left:702.6px;top:606.0px">3</div>
<div class="pl" style="left:706.4px;top:631.0px">2</div>
<div class="pl" style="left:705.2px;top:656.8px">1</div>
<div class="pl" style="left:700.2px;top:681.8px">1</div>
<div class="pl" style="left:689.0px;top:707.0px">27</div>
<div class="lg" style="left:323.6px;top:811.2px">IP Phone (14%)</div>
<div class="lg" style="left:462.8px;top:811.2px">Mobile Phone (83%)</div>
<div class="lg" style="left:634.7px;top:811.2px">PDA (2%)</div>
<div class="lg" style="left:733.8px;top:811.2px">Phone (1%)</div>
<div class="lg" style="left:323.6px;top:838.2px">Phone Centrals (1%)</div>
<div class="lg" style="left:499.7px;top:838.2px">Phone Line (1%)</div>
<svg class="abs" style="left:908px;top:468px" width="1536" height="422" viewBox="908 468 1536 422"><defs><radialGradient id="bdb" cx=".35" cy=".65" r=".75"><stop offset="0" stop-color="#86aee0"/><stop offset="1" stop-color="#5f86bd"/></radialGradient><radialGradient id="bbb" cx=".1" cy=".7" r="1"><stop offset="0" stop-color="#86aee0"/><stop offset="1" stop-color="#5f86bd"/></radialGradient><radialGradient id="bdr" cx=".35" cy=".65" r=".75"><stop offset="0" stop-color="#e88e8c"/><stop offset="1" stop-color="#c3666a"/></radialGradient><radialGradient id="bbr" cx=".1" cy=".7" r="1"><stop offset="0" stop-color="#e88e8c"/><stop offset="1" stop-color="#c3666a"/></radialGradient><radialGradient id="bdg" cx=".35" cy=".65" r=".75"><stop offset="0" stop-color="#8be0b0"/><stop offset="1" stop-color="#62bf8b"/></radialGradient><radialGradient id="bbg" cx=".1" cy=".7" r="1"><stop offset="0" stop-color="#8be0b0"/><stop offset="1" stop-color="#62bf8b"/></radialGradient><radialGradient id="bdy" cx=".35" cy=".65" r=".75"><stop offset="0" stop-color="#e0e07c"/><stop offset="1" stop-color="#bcbc58"/></radialGradient><radialGradient id="bby" cx=".1" cy=".7" r="1"><stop offset="0" stop-color="#e0e07c"/><stop offset="1" stop-color="#bcbc58"/></radialGradient><radialGradient id="bdp" cx=".35" cy=".65" r=".75"><stop offset="0" stop-color="#b4b4ea"/><stop offset="1" stop-color="#9090cc"/></radialGradient><radialGradient id="bbp" cx=".1" cy=".7" r="1"><stop offset="0" stop-color="#b4b4ea"/><stop offset="1" stop-color="#9090cc"/></radialGradient><radialGradient id="bdo" cx=".35" cy=".65" r=".75"><stop offset="0" stop-color="#e8b888"/><stop offset="1" stop-color="#cc9060"/></radialGradient><radialGradient id="bbo" cx=".1" cy=".7" r="1"><stop offset="0" stop-color="#e8b888"/><stop offset="1" stop-color="#cc9060"/></radialGradient></defs><rect x="985" y="491.6" width="1429.5" height="1.4" fill="#dedede"/><rect x="985" y="576.6" width="1429.5" height="1.4" fill="#dedede"/><rect x="985" y="661.0" width="1429.5" height="1.4" fill="#dedede"/><rect x="985" y="745.0" width="1429.5" height="1.4" fill="#dedede"/><rect x="985" y="828.9" width="1429.5" height="1.8" fill="#c9cbcf"/><rect x="1290.4" y="578.7" width="57.2" height="250.3" fill="url(#bbb)"/><rect x="1385.7" y="788.7" width="57.2" height="40.3" fill="url(#bbr)"/><rect x="1481.0" y="808.8" width="57.2" height="20.2" fill="url(#bbg)"/><rect x="1576.3" y="825.0" width="57.2" height="4.0" fill="url(#bby)"/><rect x="1671.6" y="826.6" width="57.2" height="2.4" fill="url(#bbp)"/><circle cx="1301.0" cy="845.4" r="6.7" fill="url(#bdb)"/><circle cx="1396.7" cy="845.4" r="6.7" fill="url(#bdr)"/><circle cx="1484.7" cy="845.4" r="6.7" fill="url(#bdg)"/><circle cx="1594.0" cy="845.4" r="6.7" fill="url(#bdy)"/><circle cx="1647.3" cy="845.4" r="6.7" fill="url(#bdp)"/><circle cx="1720.6" cy="845.4" r="6.7" fill="url(#bdo)"/><circle cx="1794.0" cy="845.4" r="6.7" fill="url(#bdb)"/><circle cx="1881.3" cy="845.4" r="6.7" fill="url(#bdr)"/><circle cx="1982.0" cy="845.4" r="6.7" fill="url(#bdg)"/></svg>
<div class="lg" style="left:1314.2px;top:838px">Motorola</div>
<div class="lg" style="left:1409.5px;top:838px">Linksys</div>
<div class="lg" style="left:1497.5px;top:838px">Blackberry</div>
<div class="lg" style="left:1606.5px;top:838px">HP</div>
<div class="lg" style="left:1660.2px;top:838px">Cisco</div>
<div class="lg" style="left:1733.5px;top:838px">Nokia</div>
<div class="lg" style="left:1806.9px;top:838px">SPRINT</div>
<div class="lg" style="left:1894.2px;top:838px">ALCATEL</div>
<div class="lg" style="left:1994.9px;top:838px">BlackBerrí</div>
<div class="ax" style="left:900px;width:66.5px;text-align:right;top:486.3px">200</div>
<div class="ax" style="left:900px;width:66.5px;text-align:right;top:570.3px">150</div>
<div class="ax" style="left:900px;width:66.5px;text-align:right;top:654.3px">100</div>
<div class="ax" style="left:900px;width:66.5px;text-align:right;top:738.3px">50</div>
<div class="ax" style="left:900px;width:66.5px;text-align:right;top:822.3px">0</div>
<div id="th">
<div class="hc" style="left:0px;width:356px;border-left:none;padding-left:18.5px">ID<svg class="abs" style="right:14px;top:12.8px" width="13" height="17" viewBox="0 0 13 17"><path d="M6.5 .3L12.8 7.3H.2Z" fill="#7f9e97"/><path d="M.2 9.9H12.8L6.5 16.7Z" fill="#7f9e97"/></svg></div>
<div class="hc" style="left:356px;width:280px">Type<svg class="abs" style="right:14px;top:12.8px" width="13" height="17" viewBox="0 0 13 17"><path d="M6.5 .3L12.8 7.3H.2Z" fill="#7f9e97"/><path d="M.2 9.9H12.8L6.5 16.7Z" fill="#7f9e97"/></svg></div>
<div class="hc" style="left:636px;width:220px">Brand<svg class="abs" style="right:14px;top:12.8px" width="13" height="17" viewBox="0 0 13 17"><path d="M6.5 .3L12.8 7.3H.2Z" fill="#fff"/><path d="M.2 9.9H12.8L6.5 16.7Z" fill="#fcf000"/></svg></div>
<div class="hc" style="left:856px;width:228px">Model<svg class="abs" style="right:14px;top:12.8px" width="13" height="17" viewBox="0 0 13 17"><path d="M6.5 .3L12.8 7.3H.2Z" fill="#7f9e97"/><path d="M.2 9.9H12.8L6.5 16.7Z" fill="#7f9e97"/></svg></div>
<div class="hc" style="left:1084px;width:292px">Serial<svg class="abs" style="right:14px;top:12.8px" width="13" height="17" viewBox="0 0 13 17"><path d="M6.5 .3L12.8 7.3H.2Z" fill="#7f9e97"/><path d="M.2 9.9H12.8L6.5 16.7Z" fill="#7f9e97"/></svg></div>
<div class="hc" style="left:1376px;width:573px">Location<svg class="abs" style="right:14px;top:12.8px" width="13" height="17" viewBox="0 0 13 17"><path d="M6.5 .3L12.8 7.3H.2Z" fill="#7f9e97"/><path d="M.2 9.9H12.8L6.5 16.7Z" fill="#7f9e97"/></svg></div>
<div class="hc" style="left:1949px;width:314px">Owner<svg class="abs" style="right:14px;top:12.8px" width="13" height="17" viewBox="0 0 13 17"><path d="M6.5 .3L12.8 7.3H.2Z" fill="#7f9e97"/><path d="M.2 9.9H12.8L6.5 16.7Z" fill="#7f9e97"/></svg></div>
</div>
<div class="row f" style="top:946px;height:39px"><div class="c b" style="left:0px;width:356px;border-left-color:#dcdcdc"><span>PH24534</span><svg width="7.5" height="7.5" viewBox="0 0 8 8"><path d="M2.4 .8H7.2V5.6M7 1L1 7" fill="none" stroke="#c2c2c2" stroke-width="1.5"/></svg></div><div class="c" style="left:356px;width:280px"><span>Phone Centrals</span></div><div class="c" style="left:636px;width:220px"><span>ALCATEL</span><svg width="7.5" height="7.5" viewBox="0 0 8 8"><path d="M2.4 .8H7.2V5.6M7 1L1 7" fill="none" stroke="#c2c2c2" stroke-width="1.5"/></svg></div><div class="c" style="left:856px;width:228px"><span>34535</span><svg width="7.5" height="7.5" viewBox="0 0 8 8"><path d="M2.4 .8H7.2V5.6M7 1L1 7" fill="none" stroke="#c2c2c2" stroke-width="1.5"/></svg></div><div class="c e" style="left:1084px;width:292px"></div><div class="c e" style="left:1376px;width:573px"></div><div class="c e" style="left:1949px;width:314px"></div></div>
<div class="row w" style="top:985px;height:39px"><div class="c b" style="left:0px;width:356px;border-left-color:#dcdcdc"><span>BlackBerry062</span><svg width="7.5" height="7.5" viewBox="0 0 8 8"><path d="M2.4 .8H7.2V5.6M7 1L1 7" fill="none" stroke="#c2c2c2" stroke-width="1.5"/></svg></div><div class="c" style="left:356px;width:280px"><span>Phone</span></div><div class="c" style="left:636px;width:220px"><span>BlackBerrí</span><svg width="7.5" height="7.5" viewBox="0 0 8 8"><path d="M2.4 .8H7.2V5.6M7 1L1 7" fill="none" stroke="#c2c2c2" stroke-width="1.5"/></svg></div><div class="c" style="left:856px;width:228px"><span>ÑO001</span><svg width="7.5" height="7.5" viewBox="0 0 8 8"><path d="M2.4 .8H7.2V5.6M7 1L1 7" fill="none" stroke="#c2c2c2" stroke-width="1.5"/></svg></div><div class="c" style="left:1084px;width:292px"><span>xxx</span></div><div class="c e" style="left:1376px;width:573px"></div><div class="c e" style="left:1949px;width:314px"></div></div>
<div class="row" style="top:1024px;height:38px"><div class="c b" style="left:0px;width:356px;border-left-color:#dcdcdc"><span>BB134897</span><svg width="7.5" height="7.5" viewBox="0 0 8 8"><path d="M2.4 .8H7.2V5.6M7 1L1 7" fill="none" stroke="#c2c2c2" stroke-width="1.5"/></svg></div><div class="c" style="left:356px;width:280px"><span>Phone</span></div><div class="c" style="left:636px;width:220px"><span>BlackBerry</span><svg width="7.5" height="7.5" viewBox="0 0 8 8"><path d="M2.4 .8H7.2V5.6M7 1L1 7" fill="none" stroke="#c2c2c2" stroke-width="1.5"/></svg></div><div class="c" style="left:856px;width:228px"><span>Bold 9930</span><svg width="7.5" height="7.5" viewBox="0 0 8 8"><path d="M2.4 .8H7.2V5.6M7 1L1 7" fill="none" stroke="#c2c2c2" stroke-width="1.5"/></svg></div><div class="c" style="left:1084px;width:292px"><span>6959757v74765</span></div><div class="c" style="left:1376px;width:573px"><span>Dep - Vicente Lopez</span><svg width="7.5" height="7.5" viewBox="0 0 8 8"><path d="M2.4 .8H7.2V5.6M7 1L1 7" fill="none" stroke="#c2c2c2" stroke-width="1.5"/></svg></div><div class="c" style="left:1949px;width:314px"><span>Daniela Gonzalez</span><svg width="7.5" height="7.5" viewBox="0 0 8 8"><path d="M2.4 .8H7.2V5.6M7 1L1 7" fill="none" stroke="#c2c2c2" stroke-width="1.5"/></svg></div></div>
<div class="row w" style="top:1062px;height:39px"><div class="c b" style="left:0px;width:356px;border-left-color:#dcdcdc"><span>BB44009000001</span><svg width="7.5" height="7.5" viewBox="0 0 8 8"><path d="M2.4 .8H7.2V5.6M7 1L1 7" fill="none" stroke="#c2c2c2" stroke-width="1.5"/></svg></div><div class="c" style="left:356px;width:280px"><span>Mobile Phone</span></div><div class="c" style="left:636px;width:220px"><span>Blackberry</span><svg width="7.5" height="7.5" viewBox="0 0 8 8"><path d="M2.4 .8H7.2V5.6M7 1L1 7" fill="none" stroke="#c2c2c2" stroke-width="1.5"/></svg></div><div class="c" style="left:856px;width:228px"><span>Bold 9930</span><svg width="7.5" height="7.5" viewBox="0 0 8 8"><path d="M2.4 .8H7.2V5.6M7 1L1 7" fill="none" stroke="#c2c2c2" stroke-width="1.5"/></svg></div><div class="c" style="left:1084px;width:292px"><span>587658765</span></div><div class="c" style="left:1376px;width:573px"><span>ARG - Buenos Aires - Pilar</span><svg width="7.5" height="7.5" viewBox="0 0 8 8"><path d="M2.4 .8H7.2V5.6M7 1L1 7" fill="none" stroke="#c2c2c2" stroke-width="1.5"/></svg></div><div class="c" style="left:1949px;width:314px"><span>Silvana Gutierrez</span><svg width="7.5" height="7.5" viewBox="0 0 8 8"><path d="M2.4 .8H7.2V5.6M7 1L1 7" fill="none" stroke="#c2c2c2" stroke-width="1.5"/></svg></div></div>
<div class="row" style="top:1101px;height:39px"><div class="c b" style="left:0px;width:356px;border-left-color:#dcdcdc"><span>BB44009000002</span><svg width="7.5" height="7.5" viewBox="0 0 8 8"><path d="M2.4 .8H7.2V5.6M7 1L1 7" fill="none" stroke="#c2c2c2" stroke-width="1.5"/></svg></div><div class="c" style="left:356px;width:280px"><span>Mobile Phone</span></div><div class="c" style="left:636px;width:220px"><span>Blackberry</span><svg width="7.5" height="7.5" viewBox="0 0 8 8"><path d="M2.4 .8H7.2V5.6M7 1L1 7" fill="none" stroke="#c2c2c2" stroke-width="1.5"/></svg></div><div class="c" style="left:856px;width:228px"><span>Bold 9930</span><svg width="7.5" height="7.5" viewBox="0 0 8 8"><path d="M2.4 .8H7.2V5.6M7 1L1 7" fill="none" stroke="#c2c2c2" stroke-width="1.5"/></svg></div><div class="c" style="left:1084px;width:292px"><span>8707</span></div><div class="c e" style="left:1376px;width:573px"></div><div class="c e" style="left:1949px;width:314px"></div></div>
<div class="row w" style="top:1140px;height:38px"><div class="c b" style="left:0px;width:356px;border-left-color:#dcdcdc"><span>BB44009000003</span><svg width="7.5" height="7.5" viewBox="0 0 8 8"><path d="M2.4 .8H7.2V5.6M7 1L1 7" fill="none" stroke="#c2c2c2" stroke-width="1.5"/></svg></div><div class="c" style="left:356px;width:280px"><span>Mobile Phone</span></div><div class="c" style="left:636px;width:220px"><span>Blackberry</span><svg width="7.5" height="7.5" viewBox="0 0 8 8"><path d="M2.4 .8H7.2V5.6M7 1L1 7" fill="none" stroke="#c2c2c2" stroke-width="1.5"/></svg></div><div class="c" style="left:856px;width:228px"><span>Bold 9930</span><svg width="7.5" height="7.5" viewBox="0 0 8 8"><path d="M2.4 .8H7.2V5.6M7 1L1 7" fill="none" stroke="#c2c2c2" stroke-width="1.5"/></svg></div><div class="c" style="left:1084px;width:292px"><span>09870987</span></div><div class="c e" style="left:1376px;width:573px"></div><div class="c e" style="left:1949px;width:314px"></div></div>
<div class="row" style="top:1178px;height:39px"><div class="c b" style="left:0px;width:356px;border-left-color:#dcdcdc"><span>BB44009000004</span><svg width="7.5" height="7.5" viewBox="0 0 8 8"><path d="M2.4 .8H7.2V5.6M7 1L1 7" fill="none" stroke="#c2c2c2" stroke-width="1.5"/></svg></div><div class="c" style="left:356px;width:280px"><span>Mobile Phone</span></div><div class="c" style="left:636px;width:220px"><span>Blackberry</span><svg width="7.5" height="7.5" viewBox="0 0 8 8"><path d="M2.4 .8H7.2V5.6M7 1L1 7" fill="none" stroke="#c2c2c2" stroke-width="1.5"/></svg></div><div class="c" style="left:856px;width:228px"><span>Bold 9930</span><svg width="7.5" height="7.5" viewBox="0 0 8 8"><path d="M2.4 .8H7.2V5.6M7 1L1 7" fill="none" stroke="#c2c2c2" stroke-width="1.5"/></svg></div><div class="c" style="left:1084px;width:292px"><span>0987097</span></div><div class="c e" style="left:1376px;width:573px"></div><div class="c e" style="left:1949px;width:314px"></div></div>
<div class="row w" style="top:1217px;height:39px"><div class="c b" style="left:0px;width:356px;border-left-color:#dcdcdc"><span>BB44009000005</span><svg width="7.5" height="7.5" viewBox="0 0 8 8"><path d="M2.4 .8H7.2V5.6M7 1L1 7" fill="none" stroke="#c2c2c2" stroke-width="1.5"/></svg></div><div class="c" style="left:356px;width:280px"><span>Mobile Phone</span></div><div class="c" style="left:636px;width:220px"><span>Blackberry</span><svg width="7.5" height="7.5" viewBox="0 0 8 8"><path d="M2.4 .8H7.2V5.6M7 1L1 7" fill="none" stroke="#c2c2c2" stroke-width="1.5"/></svg></div><div class="c" style="left:856px;width:228px"><span>Bold 9930</span><svg width="7.5" height="7.5" viewBox="0 0 8 8"><path d="M2.4 .8H7.2V5.6M7 1L1 7" fill="none" stroke="#c2c2c2" stroke-width="1.5"/></svg></div><div class="c" style="left:1084px;width:292px"><span>08707</span></div><div class="c e" style="left:1376px;width:573px"></div><div class="c e" style="left:1949px;width:314px"></div></div>
<div class="row" style="top:1256px;height:39px"><div class="c b" style="left:0px;width:356px;border-left-color:#dcdcdc"><span>BB44009000006</span><svg width="7.5" height="7.5" viewBox="0 0 8 8"><path d="M2.4 .8H7.2V5.6M7 1L1 7" fill="none" stroke="#c2c2c2" stroke-width="1.5"/></svg></div><div class="c" style="left:356px;width:280px"><span>Mobile Phone</span></div><div class="c" style="left:636px;width:220px"><span>Blackberry</span><svg width="7.5" height="7.5" viewBox="0 0 8 8"><path d="M2.4 .8H7.2V5.6M7 1L1 7" fill="none" stroke="#c2c2c2" stroke-width="1.5"/></svg></div><div class="c" style="left:856px;width:228px"><span>Bold 9930</span><svg width="7.5" height="7.5" viewBox="0 0 8 8"><path d="M2.4 .8H7.2V5.6M7 1L1 7" fill="none" stroke="#c2c2c2" stroke-width="1.5"/></svg></div><div class="c" style="left:1084px;width:292px"><span>0987098765</span></div><div class="c e" style="left:1376px;width:573px"></div><div class="c e" style="left:1949px;width:314px"></div></div>
<div class="row w" style="top:1295px;height:38px"><div class="c b" style="left:0px;width:356px;border-left-color:#dcdcdc"><span>BB44009000007</span><svg width="7.5" height="7.5" viewBox="0 0 8 8"><path d="M2.4 .8H7.2V5.6M7 1L1 7" fill="none" stroke="#c2c2c2" stroke-width="1.5"/></svg></div><div class="c" style="left:356px;width:280px"><span>Mobile Phone</span></div><div class="c" style="left:636px;width:220px"><span>Blackberry</span><svg width="7.5" height="7.5" viewBox="0 0 8 8"><path d="M2.4 .8H7.2V5.6M7 1L1 7" fill="none" stroke="#c2c2c2" stroke-width="1.5"/></svg></div><div class="c" style="left:856px;width:228px"><span>Bold 9930</span><svg width="7.5" height="7.5" viewBox="0 0 8 8"><path d="M2.4 .8H7.2V5.6M7 1L1 7" fill="none" stroke="#c2c2c2" stroke-width="1.5"/></svg></div><div class="c" style="left:1084px;width:292px"><span>658765</span></div><div class="c e" style="left:1376px;width:573px"></div><div class="c e" style="left:1949px;width:314px"></div></div>
<div class="row" style="top:1333px;height:39px"><div class="c b" style="left:0px;width:356px;border-left-color:#dcdcdc"><span>BB44009000008</span><svg width="7.5" height="7.5" viewBox="0 0 8 8"><path d="M2.4 .8H7.2V5.6M7 1L1 7" fill="none" stroke="#c2c2c2" stroke-width="1.5"/></svg></div><div class="c" style="left:356px;width:280px"><span>Mobile Phone</span></div><div class="c" style="left:636px;width:220px"><span>Blackberry</span><svg width="7.5" height="7.5" viewBox="0 0 8 8"><path d="M2.4 .8H7.2V5.6M7 1L1 7" fill="none" stroke="#c2c2c2" stroke-width="1.5"/></svg></div><div class="c" style="left:856px;width:228px"><span>Bold 9930</span><svg width="7.5" height="7.5" viewBox="0 0 8 8"><path d="M2.4 .8H7.2V5.6M7 1L1 7" fill="none" stroke="#c2c2c2" stroke-width="1.5"/></svg></div><div class="c" style="left:1084px;width:292px"><span>0986875434562</span></div><div class="c e" style="left:1376px;width:573px"></div><div class="c e" style="left:1949px;width:314px"></div></div>
<div class="abs" style="left:2477px;top:946px;width:1px;height:426px;background:#d9d9d9"></div>
</body>
</html>
